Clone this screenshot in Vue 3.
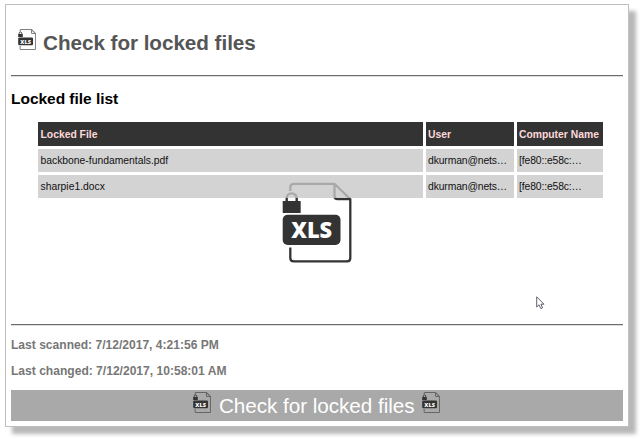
<script setup>
import { h } from 'vue'

const files = [
  { name: 'backbone-fundamentals.pdf', user: 'dkurman@nets…', computer: '[fe80::e58c:…' },
  { name: 'sharpie1.docx', user: 'dkurman@nets…', computer: '[fe80::e58c:…' },
]

// Locked spreadsheet icon; `fade` lightens the part that sits behind the table.
const LockedIcon = (props) => {
  const ink = props.fade ? 'url(#ink-fade)' : '#333'
  const line = props.fade ? ink : props.line || '#808080'
  return h('svg', { viewBox: '0 0 70 81' }, [
    props.fade &&
      h('defs', [
        h('linearGradient', { id: 'ink-fade', gradientUnits: 'userSpaceOnUse', x1: 0, y1: 0, x2: 0, y2: 81 }, [
          h('stop', { offset: 16 / 81, 'stop-color': '#a9a9a9' }),
          h('stop', { offset: 16 / 81, 'stop-color': '#333' }),
        ]),
      ]),
    h('path', {
      d: 'M8.3 9V5.5Q8.3 1.8 12 1.8H52.5L68.3 17.2V76Q68.3 79.4 65 79.4H12Q8.3 79.4 8.3 76V65.5M52.5 1.8V14Q52.5 17.2 55.7 17.2H68.3',
      fill: 'none', stroke: line, 'stroke-width': props.fade ? 2.3 : 4,
    }),
    h('path', { d: 'M4.7 20V16a5 4.6 0 0 1 10 0V20', fill: 'none', stroke: ink, 'stroke-width': props.fade ? 2.4 : 3.5 }),
    h('rect', { x: 0.7, y: 19, width: 18, height: 12, rx: 0.5, fill: '#333' }),
    h('rect', { x: 0.7, y: 32.7, width: 57.8, height: 30.2, rx: 5, fill: '#333' }),
    h('text', {
      x: 29.7, y: 56.3, 'text-anchor': 'middle', fill: '#fff', 'font-family': 'Open Sans, sans-serif',
      'font-weight': 800, 'font-size': 22.5, textLength: 41, lengthAdjust: 'spacingAndGlyphs',
    }, 'XLS'),
  ])
}
LockedIcon.props = { fade: Boolean, line: String }
</script>

<template>
  <div class="page">
    <main class="panel">
      <header class="head">
        <LockedIcon class="icon" />
        <h1>Check for locked files</h1>
      </header>
      <section class="body">
        <h2>Locked file list</h2>
        <div class="grid">
          <div class="cell th">Locked File</div>
          <div class="cell th">User</div>
          <div class="cell th">Computer Name</div>
          <template v-for="f in files" :key="f.name">
            <div class="cell">{{ f.name }}</div>
            <div class="cell long">{{ f.user }}</div>
            <div class="cell long">{{ f.computer }}</div>
          </template>
        </div>
      </section>
      <footer class="foot">
        <p>Last scanned: 7/12/2017, 4:21:56 PM</p>
        <p>Last changed: 7/12/2017, 10:58:01 AM</p>
        <button class="check" type="button">
          <LockedIcon class="icon" line="#666" />
          <span>Check for locked files</span>
          <LockedIcon class="icon" line="#666" />
        </button>
      </footer>
      <LockedIcon class="watermark" fade />
      <svg class="cursor" viewBox="0 0 9 14">
        <path d="M.7 .8V11L3 8.8L4.8 12.6L6.6 11.8L4.9 8.2H8Z" fill="#fff" stroke="#50505c" stroke-width=".9" />
      </svg>
    </main>
  </div>
</template>

<style>
body {
  background: #fff;
}
</style>

<style scoped>
.page {
  box-sizing: border-box;
  height: 440px;
  padding: 4px 0 0 5px;
  overflow: hidden;
}
.panel {
  position: relative;
  box-sizing: border-box;
  width: 623.5px;
  height: 422.5px;
  padding: 0 5px;
  border: 1px solid #c0c0c0;
  background: #fff;
  box-shadow: 6.5px 6.5px 4px #b8b8b8;
  font-family: "Liberation Sans", Arial, sans-serif;
}
.head {
  box-sizing: border-box;
  height: 71px;
  padding: 24px 0 0 7px;
  display: flex;
  align-items: flex-start;
  border-bottom: 1px solid #6c6c6c;
  box-shadow: 0 1px #ddd;
}
.icon {
  width: 18px;
  height: 21px;
  flex: none;
}
h1 {
  margin: 2px 0 0 7px;
  font-size: 20.7px;
  line-height: 24px;
  letter-spacing: -0.05px;
  color: #555;
}
.body {
  box-sizing: border-box;
  height: 249px;
  padding-top: 14px;
  border-bottom: 1px solid #6c6c6c;
  box-shadow: 0 1px #ddd;
}
h2 {
  margin: 0;
  font-size: 15.5px;
  line-height: 18px;
  letter-spacing: -0.03px;
  color: #000;
}
.grid {
  display: grid;
  grid-template-columns: 385px 88.5px 86px;
  grid-template-rows: 24px 23.5px 23.5px;
  gap: 2.5px;
  margin: 14px 0 0 27px;
}
.cell {
  padding-left: 2.5px;
  background: #d3d3d3;
  color: #111;
  font-size: 10.35px;
  line-height: 23px;
  white-space: nowrap;
  overflow: hidden;
}
.long {
  letter-spacing: -0.12px;
}
.th {
  background: #333;
  color: #fdd9d9;
  font-weight: bold;
  line-height: 25px;
}
.foot {
  padding-top: 7px;
}
p {
  margin: 0;
  font-size: 12.07px;
  font-weight: bold;
  line-height: 26px;
  color: #777;
}
.check {
  width: 100%;
  height: 31px;
  margin: 6px 0 0;
  padding: 0;
  border: 0;
  background: #a9a9a9;
  color: #fff;
  font: 20.7px/31px "Liberation Sans", Arial, sans-serif;
  letter-spacing: -0.05px;
  display: flex;
  justify-content: center;
  gap: 7.5px;
}
.check .icon {
  margin-top: 2px;
}
.watermark {
  position: absolute;
  left: 276px;
  top: 177px;
  width: 70px;
  height: 81px;
}
.cursor {
  position: absolute;
  left: 530px;
  top: 291px;
  width: 9px;
  height: 14px;
}
</style>
